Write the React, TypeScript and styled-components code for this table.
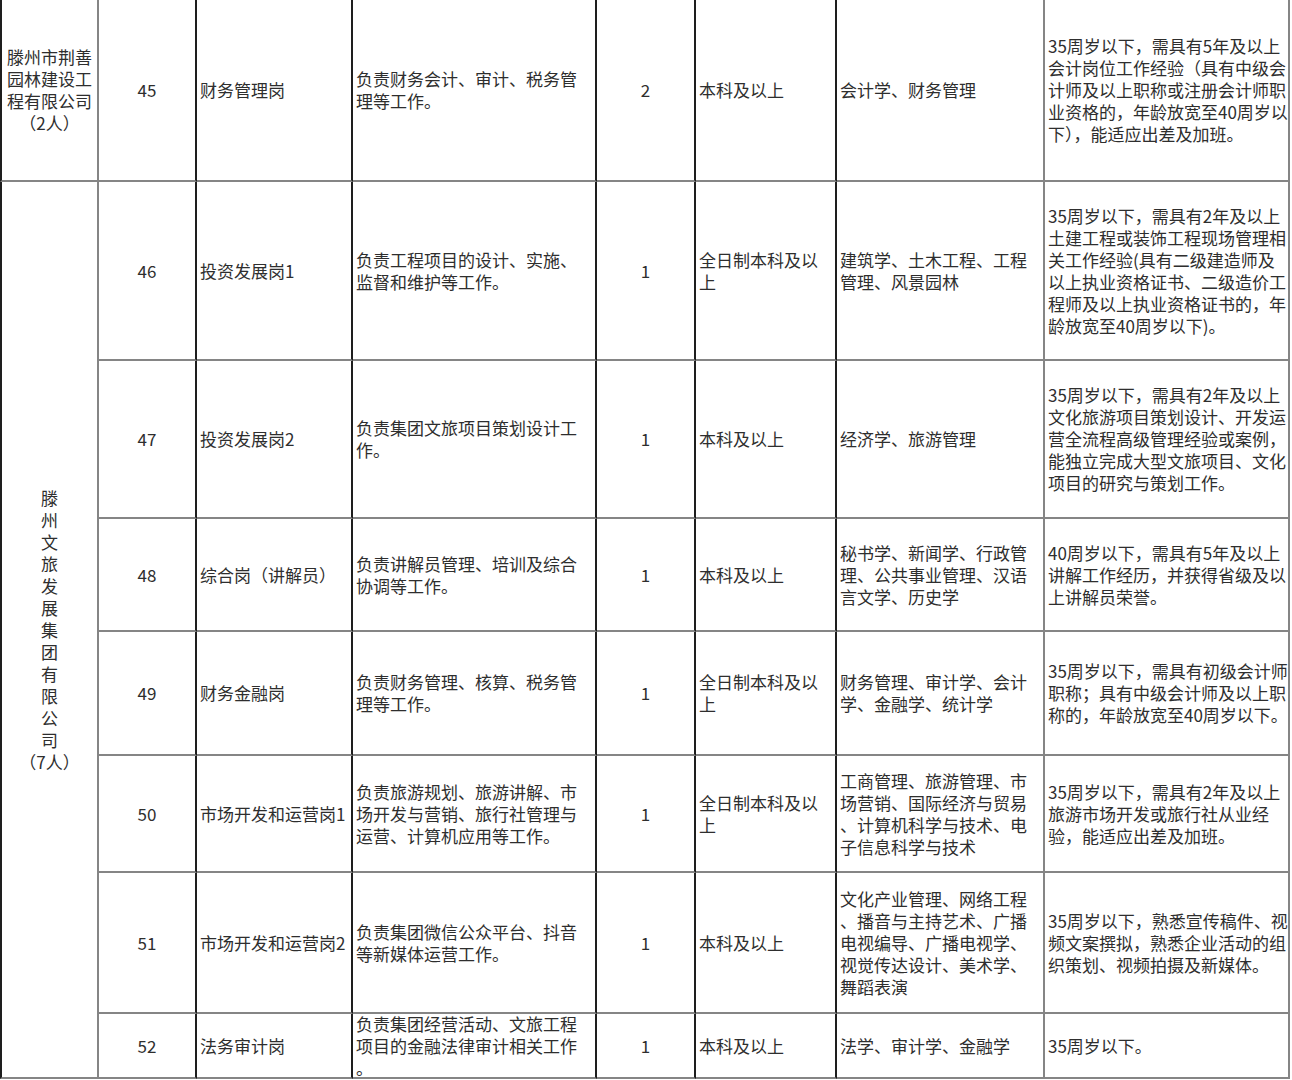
import styled, { createGlobalStyle } from 'styled-components'

const GlobalStyle = createGlobalStyle`
  html, body {
    margin: 0;
    padding: 0;
    background: #fff;
  }
  body {
    font-family: "Noto Sans CJK SC", "Liberation Serif", serif;
    color: #2e2e2e;
  }
`

const DARK = '#1e1e1e'
const LIGHT = '#858585'

// right-hand line colour of each column
const colLines = [LIGHT, DARK, DARK, DARK, DARK, DARK, LIGHT, LIGHT]

const Sheet = styled.div`
  display: grid;
  grid-template-columns: 99px 98px 156px 244px 99px 141px 208px 245px;
  grid-template-rows: 182px 179px 158px 113px 124px 117px 141px 65px;
  width: 1290px;
  font-size: 17px;
  line-height: 22px;
`

const Cell = styled.div<{ $line: string; $center?: boolean; $edge?: boolean; $span?: number }>`
  box-sizing: border-box;
  display: flex;
  flex-direction: column;
  justify-content: center;
  align-items: ${p => p.$center ? 'center' : 'flex-start'};
  padding: 0 0 0 3px;
  padding-left: ${p => p.$center ? '0' : '3px'};
  border-right: 2px solid ${p => p.$line};
  border-bottom: 2px solid ${LIGHT};
  border-left: ${p => p.$edge ? `2px solid ${DARK}` : 'none'};
  grid-row: ${p => p.$span ? `span ${p.$span}` : 'auto'};
  overflow: visible;
  min-width: 0;
`

const Line = styled.span`
  display: block;
  white-space: nowrap;
`

type Job = {
  no: number
  title: string
  duty: string[]
  count: number
  edu: string[]
  major: string[]
  req: string[]
}

const jobs: Job[] = [
  {
    no: 45, title: '财务管理岗',
    duty: ['负责财务会计、审计、税务管', '理等工作。'],
    count: 2, edu: ['本科及以上'], major: ['会计学、财务管理'],
    req: ['35周岁以下，需具有5年及以上', '会计岗位工作经验（具有中级会', '计师及以上职称或注册会计师职', '业资格的，年龄放宽至40周岁以', '下），能适应出差及加班。'],
  },
  {
    no: 46, title: '投资发展岗1',
    duty: ['负责工程项目的设计、实施、', '监督和维护等工作。'],
    count: 1, edu: ['全日制本科及以', '上'], major: ['建筑学、土木工程、工程', '管理、风景园林'],
    req: ['35周岁以下，需具有2年及以上', '土建工程或装饰工程现场管理相', '关工作经验(具有二级建造师及', '以上执业资格证书、二级造价工', '程师及以上执业资格证书的，年', '龄放宽至40周岁以下)。'],
  },
  {
    no: 47, title: '投资发展岗2',
    duty: ['负责集团文旅项目策划设计工', '作。'],
    count: 1, edu: ['本科及以上'], major: ['经济学、旅游管理'],
    req: ['35周岁以下，需具有2年及以上', '文化旅游项目策划设计、开发运', '营全流程高级管理经验或案例，', '能独立完成大型文旅项目、文化', '项目的研究与策划工作。'],
  },
  {
    no: 48, title: '综合岗（讲解员）',
    duty: ['负责讲解员管理、培训及综合', '协调等工作。'],
    count: 1, edu: ['本科及以上'], major: ['秘书学、新闻学、行政管', '理、公共事业管理、汉语', '言文学、历史学'],
    req: ['40周岁以下，需具有5年及以上', '讲解工作经历，并获得省级及以', '上讲解员荣誉。'],
  },
  {
    no: 49, title: '财务金融岗',
    duty: ['负责财务管理、核算、税务管', '理等工作。'],
    count: 1, edu: ['全日制本科及以', '上'], major: ['财务管理、审计学、会计', '学、金融学、统计学'],
    req: ['35周岁以下，需具有初级会计师', '职称；具有中级会计师及以上职', '称的，年龄放宽至40周岁以下。'],
  },
  {
    no: 50, title: '市场开发和运营岗1',
    duty: ['负责旅游规划、旅游讲解、市', '场开发与营销、旅行社管理与', '运营、计算机应用等工作。'],
    count: 1, edu: ['全日制本科及以', '上'], major: ['工商管理、旅游管理、市', '场营销、国际经济与贸易', '、计算机科学与技术、电', '子信息科学与技术'],
    req: ['35周岁以下，需具有2年及以上', '旅游市场开发或旅行社从业经', '验，能适应出差及加班。'],
  },
  {
    no: 51, title: '市场开发和运营岗2',
    duty: ['负责集团微信公众平台、抖音', '等新媒体运营工作。'],
    count: 1, edu: ['本科及以上'], major: ['文化产业管理、网络工程', '、播音与主持艺术、广播', '电视编导、广播电视学、', '视觉传达设计、美术学、', '舞蹈表演'],
    req: ['35周岁以下，熟悉宣传稿件、视', '频文案撰拟，熟悉企业活动的组', '织策划、视频拍摄及新媒体。'],
  },
  {
    no: 52, title: '法务审计岗',
    duty: ['负责集团经营活动、文旅工程', '项目的金融法律审计相关工作', '。'],
    count: 1, edu: ['本科及以上'], major: ['法学、审计学、金融学'],
    req: ['35周岁以下。'],
  },
]

const companies = [
  { lines: ['滕州市荆善', '园林建设工', '程有限公司', '（2人）'], rows: 1 },
  { lines: [...'滕州文旅发展集团有限公司'.split(''), '（7人）'], rows: 7 },
]

function Lines({ items }: { items: string[] }) {
  return <>{items.map((t, i) => <Line key={i}>{t}</Line>)}</>
}

function JobCells({ job }: { job: Job }) {
  return (
    <>
      <Cell $line={colLines[1]} $center>{job.no}</Cell>
      <Cell $line={colLines[2]}><Line>{job.title}</Line></Cell>
      <Cell $line={colLines[3]}><Lines items={job.duty} /></Cell>
      <Cell $line={colLines[4]} $center>{job.count}</Cell>
      <Cell $line={colLines[5]}><Lines items={job.edu} /></Cell>
      <Cell $line={colLines[6]}><Lines items={job.major} /></Cell>
      <Cell $line={colLines[7]}><Lines items={job.req} /></Cell>
    </>
  )
}

export default function App() {
  let idx = 0
  return (
    <>
      <GlobalStyle />
      <Sheet>
        {companies.map((c, ci) => {
          const group = jobs.slice(idx, idx + c.rows)
          idx += c.rows
          return group.map((job, ji) => (
            <JobRow key={job.no} first={ji === 0} company={c} span={c.rows} job={job} ci={ci} />
          ))
        })}
      </Sheet>
    </>
  )
}

function JobRow({ first, company, span, job }: {
  first: boolean
  company: { lines: string[] }
  span: number
  job: Job
  ci: number
}) {
  return (
    <>
      {first && (
        <Cell $line={colLines[0]} $center $edge $span={span}>
          <Lines items={company.lines} />
        </Cell>
      )}
      <JobCells job={job} />
    </>
  )
}
